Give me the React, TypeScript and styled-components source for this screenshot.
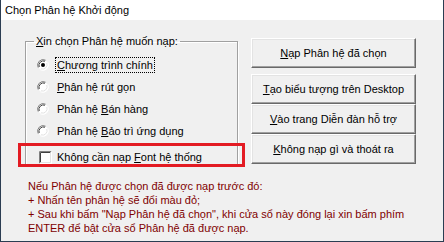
import React from "react";
import styled, { createGlobalStyle } from "styled-components";

const GlobalStyle = createGlobalStyle`
  html, body {
    margin: 0;
    padding: 0;
    background: #f0f0f0;
  }
  body {
    font-family: "Liberation Sans", Arial, sans-serif;
    font-size: 11px;
    color: #000;
  }
`;

const radios = [
  { pre: "", key: "C", post: "hương trình chính", checked: true },
  { pre: "", key: "P", post: "hân hệ rút gọn", checked: false },
  { pre: "Phân hệ ", key: "B", post: "án hàng", checked: false },
  { pre: "Phân hệ ", key: "B", post: "ảo trì ứng dụng", checked: false },
];

const buttons = [
  { key: "N", post: "ạp Phân hệ đã chọn" },
  { key: "T", post: "ạo biểu tượng trên Desktop" },
  { key: "V", post: "ào trang Diễn đàn hỗ trợ" },
  { key: "K", post: "hông nạp gì và thoát ra" },
];

const RadioIcon = ({ checked }: { checked: boolean }) => (
  <svg width="12" height="12" viewBox="0 0 12 12">
    <circle cx="6" cy="6" r="5" fill="#fff" />
    <path d="M1.2 8.6 A5.5 5.5 0 0 1 8.6 1.2" stroke="#808080" fill="none" />
    <path d="M2.2 8 A4.5 4.5 0 0 1 8 2.2" stroke="#404040" fill="none" />
    <path d="M10.8 3.4 A5.5 5.5 0 0 1 3.4 10.8" stroke="#ffffff" fill="none" />
    <path d="M9.8 4 A4.5 4.5 0 0 1 4 9.8" stroke="#e3e3e3" fill="none" />
    {checked && <circle cx="6" cy="6" r="2" fill="#000" />}
  </svg>
);

const CheckIcon = () => (
  <svg width="13" height="13" viewBox="0 0 13 13">
    <rect x="0" y="0" width="13" height="13" fill="#fff" />
    <path d="M0.5 12.5 V0.5 H12.5" stroke="#808080" fill="none" />
    <path d="M1.5 11.5 V1.5 H11.5" stroke="#404040" fill="none" />
    <path d="M0.5 12.5 H12.5 V0.5" stroke="#ffffff" fill="none" />
    <path d="M1.5 11.5 H11.5 V1.5" stroke="#e3e3e3" fill="none" />
  </svg>
);

export default function App() {
  return (
    <>
      <GlobalStyle />
      <Window>
        <TitleBar>Chọn Phân hệ Khởi động</TitleBar>
        <Body>
          <GroupBox>
            <Legend>
              <u>X</u>in chọn Phân hệ muốn nạp:
            </Legend>
            {radios.map((r, i) => (
              <OptionRow key={i}>
                <RadioIcon checked={r.checked} />
                <OptionLabel $focused={r.checked}>
                  {r.pre}
                  <u>{r.key}</u>
                  {r.post}
                </OptionLabel>
              </OptionRow>
            ))}
            <CheckRow>
              <CheckIcon />
              <OptionLabel $focused={false}>
                Không cần nạp <u>F</u>ont hệ thống
              </OptionLabel>
            </CheckRow>
          </GroupBox>
          <ButtonColumn>
            {buttons.map((b, i) => (
              <DialogButton key={i} $first={i === 0}>
                <u>{b.key}</u>
                {b.post}
              </DialogButton>
            ))}
          </ButtonColumn>
          <Note>
            Nếu Phân hệ được chọn đã được nạp trước đó:
            <br />+ Nhấn tên phân hệ sẽ đổi màu đỏ;
            <br />+ Sau khi bấm "Nạp Phân hệ đã chọn", khi cửa sổ này đóng lại xin bấm phím
            <br />
            ENTER để bật cửa sổ Phân hệ đã được nạp.
          </Note>
        </Body>
        <Highlight />
      </Window>
    </>
  );
}

const Window = styled.div`
  position: relative;
  width: 444px;
  height: 242px;
  box-sizing: border-box;
  border: 1px solid #2b3d52;
  border-top: none;
  background: #f0f0f0;
  display: flex;
  flex-direction: column;
  overflow: hidden;
`;

const TitleBar = styled.div`
  height: 20px;
  flex: 0 0 20px;
  background: #fff;
  display: flex;
  align-items: center;
  padding-left: 4px;
  font-size: 11px;
  white-space: nowrap;
`;

const Body = styled.div`
  flex: 1;
  display: grid;
  grid-template-columns: 226px 165px;
  grid-template-rows: 144px auto;
  padding-left: 24px;
`;

const GroupBox = styled.fieldset`
  margin: 15px 0 0 0;
  padding: 0 0 0 11px;
  align-self: start;
  box-sizing: border-box;
  width: 213px;
  border: 1px solid #a0a0a0;
  box-shadow: inset 1px 1px 0 #fff, 1px 1px 0 #fff;
  display: flex;
  flex-direction: column;
  min-width: 0;
`;

const Legend = styled.legend`
  padding: 0 2px;
  margin-left: -3px;
  line-height: 13px;
  white-space: nowrap;
`;

const OptionRow = styled.div`
  display: flex;
  flex-shrink: 0;
  align-items: center;
  gap: 6px;
  height: 22px;
  &:first-of-type {
    margin-top: 6px;
  }
`;

const CheckRow = styled.div`
  display: flex;
  flex-shrink: 0;
  align-items: center;
  gap: 3px;
  height: 16px;
  margin-top: 7px;
  padding-left: 2px;
`;

const OptionLabel = styled.span<{ $focused: boolean }>`
  white-space: nowrap;
  padding: 1px 1px;
  border: 1px dotted ${(p) => (p.$focused ? "#000" : "transparent")};
`;

const ButtonColumn = styled.div`
  display: flex;
  flex-direction: column;
  padding-top: 18px;
`;

const DialogButton = styled.div<{ $first: boolean }>`
  height: 30px;
  width: 165px;
  flex-shrink: 0;
  box-sizing: border-box;
  display: flex;
  align-items: center;
  justify-content: center;
  white-space: nowrap;
  background: #f0f0f0;
  border: 1px solid;
  border-color: #fff #696969 #696969 #fff;
  box-shadow: inset -1px -1px 0 #a0a0a0, inset 1px 1px 0 #e3e3e3;
  margin-bottom: ${(p) => (p.$first ? "6px" : "0")};
`;

const Note = styled.div`
  grid-column: 1 / -1;
  color: #800000;
  line-height: 14px;
  padding: 15px 0 0 3px;
  white-space: nowrap;
`;

const Highlight = styled.div`
  position: absolute;
  left: 17px;
  top: 143px;
  width: 227px;
  height: 24px;
  box-sizing: border-box;
  border: 3px solid #e31b23;
  pointer-events: none;
`;
